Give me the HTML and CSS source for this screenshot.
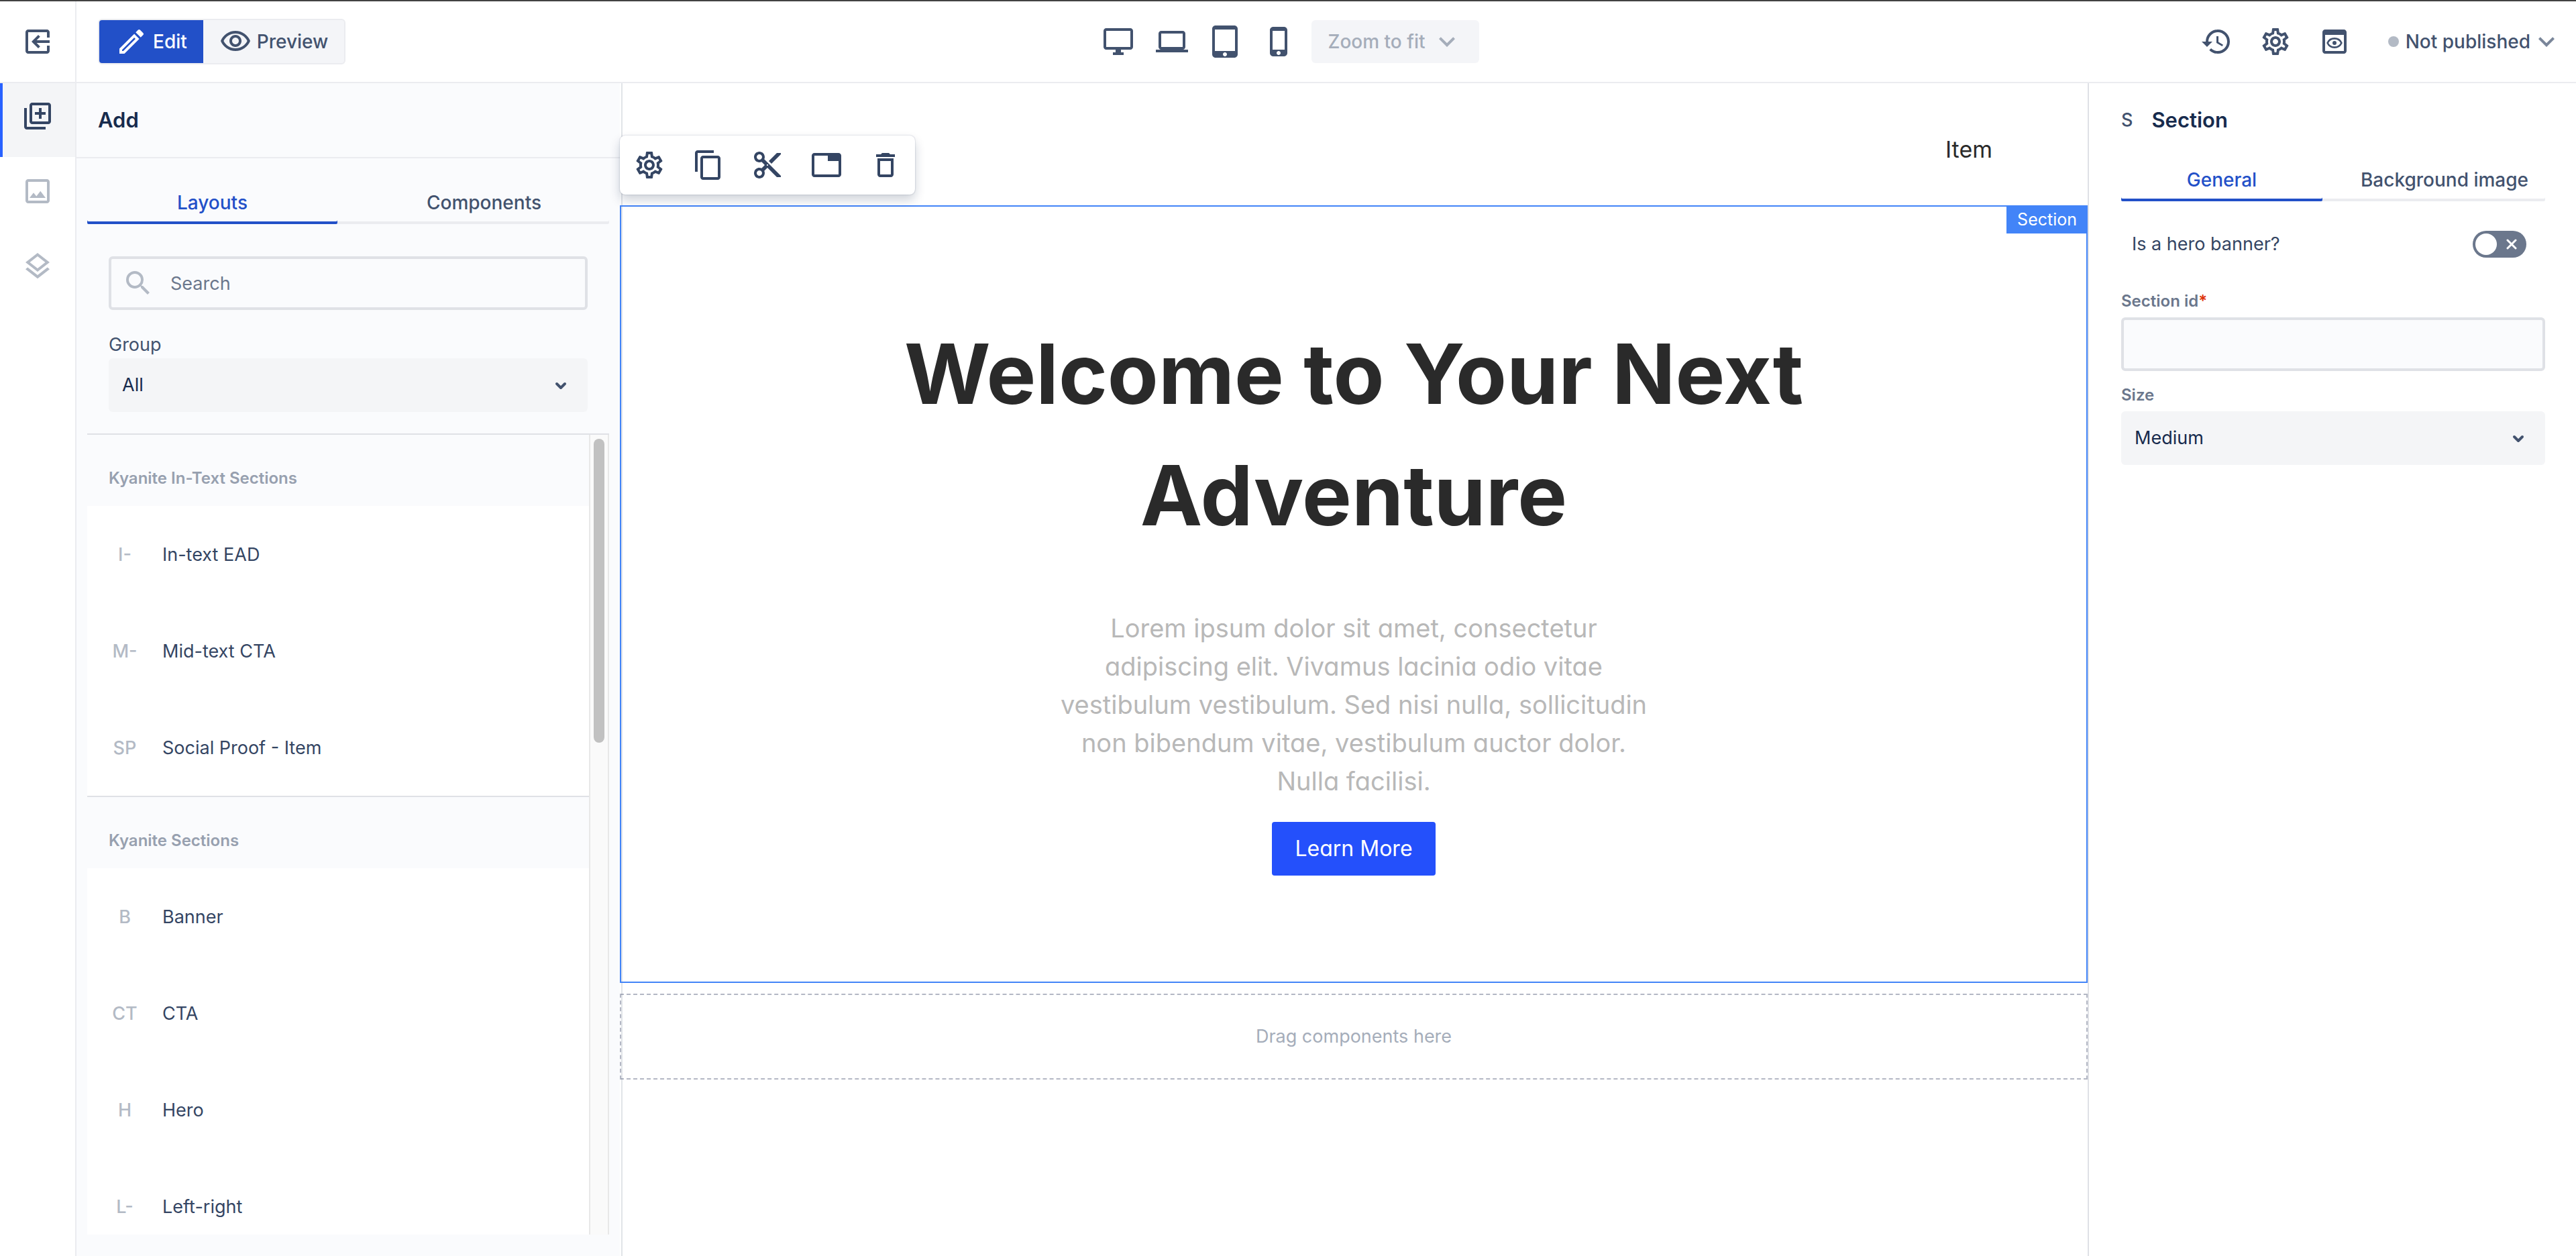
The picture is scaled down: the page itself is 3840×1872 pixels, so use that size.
FILE: index.html
```html
<!DOCTYPE html>
<html lang="en">
<head>
<meta charset="utf-8">
<meta name="viewport" content="width=device-width, initial-scale=1">
<title>Page editor</title>
<link rel="stylesheet" href="styles.css">
</head>
<body>
<svg class="sprite" aria-hidden="true">
  <symbol id="i-gear" viewBox="0 0 24 24"><path d="M19.43 12.98c.04-.32.07-.64.07-.98 0-.34-.03-.66-.07-.98l2.11-1.65c.19-.15.24-.42.12-.64l-2-3.46c-.09-.16-.26-.25-.44-.25-.06 0-.12.01-.17.03l-2.49 1c-.52-.4-1.08-.73-1.69-.98l-.38-2.65C14.46 2.18 14.25 2 14 2h-4c-.25 0-.46.18-.49.42l-.38 2.65c-.61.25-1.17.59-1.69.98l-2.49-1c-.06-.02-.12-.03-.18-.03-.17 0-.34.09-.43.25l-2 3.46c-.13.22-.07.49.12.64l2.11 1.65c-.04.32-.07.65-.07.98 0 .33.03.66.07.98l-2.11 1.65c-.19.15-.24.42-.12.64l2 3.46c.09.16.26.25.44.25.06 0 .12-.01.17-.03l2.49-1c.52.4 1.08.73 1.69.98l.38 2.65c.03.24.24.42.49.42h4c.25 0 .46-.18.49-.42l.38-2.65c.61-.25 1.17-.59 1.69-.98l2.49 1c.06.02.12.03.18.03.17 0 .34-.09.43-.25l2-3.46c.12-.22.07-.49-.12-.64l-2.11-1.65zm-1.98-1.71c.04.31.05.52.05.73 0 .21-.02.43-.05.73l-.14 1.13.89.7 1.08.84-.7 1.21-1.27-.51-1.04-.42-.9.68c-.43.32-.84.56-1.25.73l-1.06.43-.16 1.13-.2 1.35h-1.4l-.19-1.35-.16-1.13-1.06-.43c-.43-.18-.83-.41-1.23-.71l-.91-.7-1.06.43-1.27.51-.7-1.21 1.08-.84.89-.7-.14-1.13c-.03-.31-.05-.54-.05-.74s.02-.43.05-.73l.14-1.13-.89-.7-1.08-.84.7-1.21 1.27.51 1.04.42.9-.68c.43-.32.84-.56 1.25-.73l1.06-.43.16-1.13.2-1.35h1.39l.19 1.35.16 1.13 1.06.43c.43.18.83.41 1.23.71l.91.7 1.06-.43 1.27-.51.7 1.21-1.07.85-.89.7.14 1.13zM12 8c-2.21 0-4 1.79-4 4s1.79 4 4 4 4-1.79 4-4-1.79-4-4-4zm0 6c-1.1 0-2-.9-2-2s.9-2 2-2 2 .9 2 2-.9 2-2 2z"/></symbol>
  <symbol id="i-chevron" viewBox="0 0 24 24"><path d="M16.59 8.59 12 13.17 7.41 8.59 6 10l6 6 6-6z"/></symbol>
  <symbol id="i-caret" viewBox="0 0 24 24"><path d="M9 11l3 3 3-3" fill="none" stroke="currentColor" stroke-width="2" stroke-linecap="round" stroke-linejoin="round"/></symbol>
</svg>

<header class="topbar">
  <div class="topbar-start">
    <button class="exit" aria-label="Exit"><svg class="icon" viewBox="0 0 24 24"><path d="M13.91 15.59 12.5 17l-5-5 5-5 1.41 1.41L11.33 11H21v2h-9.67l2.58 2.59zM5 3h14c1.1 0 2 .9 2 2v4h-2V5H5v14h14v-4h2v4c0 1.1-.9 2-2 2H5c-1.1 0-2-.9-2-2V5c0-1.1.9-2 2-2z"/></svg></button>
    <div class="mode">
      <button class="mode-btn mode-btn-on"><svg class="icon" viewBox="0 0 24 24"><path d="M14.06 9.02l.92.92L5.92 19H5v-.92l9.06-9.06M17.66 3c-.25 0-.51.1-.7.29l-1.83 1.83 3.75 3.75 1.83-1.83c.39-.39.39-1.02 0-1.41l-2.34-2.34c-.2-.2-.45-.29-.71-.29zm-3.6 3.19L3 17.25V21h3.75L17.81 9.94l-3.75-3.75z"/></svg>Edit</button>
      <button class="mode-btn"><svg class="icon" viewBox="0 0 24 24"><path d="M12 6c3.79 0 7.17 2.13 8.82 5.5C19.17 14.87 15.79 17 12 17s-7.17-2.13-8.82-5.5C4.83 8.13 8.21 6 12 6m0-2C7 4 2.73 7.11 1 11.5 2.73 15.89 7 19 12 19s9.27-3.11 11-7.5C21.27 7.11 17 4 12 4zm0 5c1.38 0 2.5 1.12 2.5 2.5S13.38 14 12 14s-2.5-1.12-2.5-2.5S10.62 9 12 9m0-2c-2.48 0-4.5 2.02-4.5 4.5S9.52 16 12 16s4.5-2.02 4.5-4.5S14.48 7 12 7z"/></svg>Preview</button>
    </div>
  </div>
  <div class="devices">
    <button class="icon-btn" aria-label="Desktop"><svg class="icon" viewBox="0 0 24 24"><path d="M21 2H3c-1.1 0-2 .9-2 2v12c0 1.1.9 2 2 2h7v2H8v2h8v-2h-2v-2h7c1.1 0 2-.9 2-2V4c0-1.1-.9-2-2-2zm0 14H3V4h18v12z"/></svg></button>
    <button class="icon-btn" aria-label="Laptop"><svg class="icon" viewBox="0 0 24 24"><path d="M20 18c1.1 0 1.99-.9 1.99-2L22 6c0-1.1-.9-2-2-2H4c-1.1 0-2 .9-2 2v10c0 1.1.9 2 2 2H0v2h24v-2h-4zM4 6h16v10H4V6z"/></svg></button>
    <button class="icon-btn" aria-label="Tablet"><svg class="icon" viewBox="0 0 24 24"><path d="M18.5 0h-14C3.12 0 2 1.12 2 2.5v19C2 22.88 3.12 24 4.5 24h14c1.38 0 2.5-1.12 2.5-2.5v-19C21 1.12 19.88 0 18.5 0zm-7 23c-.83 0-1.5-.67-1.5-1.5s.67-1.5 1.5-1.5 1.5.67 1.5 1.5-.67 1.5-1.5 1.5zm7.500-4H4V3h15v16z"/></svg></button>
    <button class="icon-btn" aria-label="Phone"><svg class="icon" viewBox="0 0 24 24"><path d="M15.500 1h-8C6.120 1 5 2.120 5 3.500v17C5 21.880 6.120 23 7.500 23h8c1.380 0 2.500-1.120 2.500-2.500v-17C18 2.120 16.880 1 15.500 1zm-4 21c-.83 0-1.500-.67-1.500-1.500s.67-1.500 1.500-1.500 1.500.67 1.500 1.500-.67 1.500-1.500 1.500zm4.500-4H7V4h9v14z"/></svg></button>
    <button class="zoom" disabled>Zoom to fit<svg class="icon"><use href="#i-chevron"/></svg></button>
  </div>
  <div class="topbar-end">
    <button class="icon-btn" aria-label="History"><svg class="icon" viewBox="0 0 24 24"><path d="M13 3a9 9 0 0 0-9 9H1l3.890 3.890.07.14L9 12H6c0-3.870 3.130-7 7-7s7 3.130 7 7-3.130 7-7 7c-1.930 0-3.680-.79-4.940-2.060l-1.420 1.420A8.950 8.950 0 0 0 13 21a9 9 0 0 0 0-18zm-1 5v5l4.280 2.540.72-1.210-3.500-2.080V8H12z"/></svg></button>
    <button class="icon-btn" aria-label="Settings"><svg class="icon"><use href="#i-gear"/></svg></button>
    <button class="icon-btn" aria-label="Page preview"><svg class="icon" viewBox="0 0 24 24"><path fill-rule="evenodd" d="M19 3H5c-1.110 0-2 .9-2 2v14c0 1.100.89 2 2 2h14c1.100 0 2-.9 2-2V5c0-1.100-.89-2-2-2zm0 16H5V7h14v12z"/><path d="M6.800 13C7.700 11 9.700 9.700 12 9.700s4.300 1.300 5.200 3.300c-.9 2-2.900 3.300-5.200 3.300S7.700 15 6.800 13z" fill="none" stroke="currentColor" stroke-width="1.300"/><circle cx="12" cy="13" r="1.500"/></svg></button>
    <button class="status"><span class="status-dot"></span>Not published<svg class="icon"><use href="#i-chevron"/></svg></button>
  </div>
</header>

<div class="workspace">
  <nav class="rail" aria-label="Editor panels">
    <button class="rail-btn rail-btn-on" aria-label="Add"><svg class="icon" viewBox="0 0 24 24"><path d="M4 6H2v14c0 1.100.9 2 2 2h14v-2H4V6zm16-4H8c-1.100 0-2 .9-2 2v12c0 1.100.9 2 2 2h12c1.100 0 2-.9 2-2V4c0-1.100-.9-2-2-2zm0 14H8V4h12v12zm-7-2h2v-3h3V9h-3V6h-2v3h-3v2h3z"/></svg></button>
    <button class="rail-btn" aria-label="Images"><svg class="icon" viewBox="0 0 24 24"><path d="M19 5v14H5V5h14m0-2H5c-1.100 0-2 .9-2 2v14c0 1.100.9 2 2 2h14c1.100 0 2-.9 2-2V5c0-1.100-.9-2-2-2zm-4.860 8.860l-3 3.870L9 13.140 6 17h12l-3.860-5.140z"/></svg></button>
    <button class="rail-btn" aria-label="Layers"><svg class="icon" viewBox="0 0 24 24"><path d="M11.990 18.540l-7.370-5.730L3 14.070l9 7 9-7-1.630-1.270-7.380 5.740zM12 16l7.360-5.730L21 9l-9-7-9 7 1.630 1.270L12 16zm0-11.470L17.740 9 12 13.470 6.260 9 12 4.530z"/></svg></button>
  </nav>

  <aside class="library">
    <h2 class="panel-title library-title">Add</h2>
    <div class="library-body">
      <div class="tabs" role="tablist">
        <button class="tab tab-on" role="tab" aria-selected="true">Layouts</button>
        <button class="tab" role="tab" aria-selected="false">Components</button>
      </div>
      <div class="filters">
        <div class="search">
          <svg class="icon" viewBox="0 0 24 24"><path d="M15.500 14h-.79l-.28-.27A6.471 6.471 0 0 0 16 9.500 6.500 6.500 0 1 0 9.500 16c1.610 0 3.090-.59 4.230-1.570l.27.28v.79l5 4.990L20.490 19l-4.990-5zm-6 0C7.010 14 5 11.990 5 9.500S7.010 5 9.500 5 14 7.010 14 9.500 11.990 14 9.500 14z"/></svg>
          <input class="search-input" type="search" placeholder="Search" aria-label="Search">
        </div>
        <label class="group-label" for="group">Group</label>
        <div class="picker">
          <select id="group" class="select"><option>All</option></select>
          <svg class="icon picker-caret"><use href="#i-caret"/></svg>
        </div>
      </div>
      <div class="results">
        <div class="results-list">
          <section class="kit">
            <h3 class="kit-title">Kyanite In-Text Sections</h3>
            <ul class="kit-items">
              <li class="kit-item"><span class="kit-mark">I-</span>In-text EAD</li>
              <li class="kit-item"><span class="kit-mark">M-</span>Mid-text CTA</li>
              <li class="kit-item"><span class="kit-mark">SP</span>Social Proof - Item</li>
            </ul>
          </section>
          <section class="kit">
            <h3 class="kit-title">Kyanite Sections</h3>
            <ul class="kit-items">
              <li class="kit-item"><span class="kit-mark">B</span>Banner</li>
              <li class="kit-item"><span class="kit-mark">CT</span>CTA</li>
              <li class="kit-item"><span class="kit-mark">H</span>Hero</li>
              <li class="kit-item"><span class="kit-mark">L-</span>Left-right</li>
            </ul>
          </section>
        </div>
        <div class="scrollbar" aria-hidden="true"><div class="scrollbar-thumb"></div></div>
      </div>
    </div>
  </aside>

  <main class="canvas">
    <div class="site-nav"><a class="site-link" href="#">Item</a></div>
    <section class="block">
      <div class="block-tools">
        <button class="icon-btn" aria-label="Settings"><svg class="icon"><use href="#i-gear"/></svg></button>
        <button class="icon-btn" aria-label="Copy"><svg class="icon" viewBox="0 0 24 24"><path d="M16 1H4c-1.100 0-2 .9-2 2v14h2V3h12V1zm3 4H8c-1.100 0-2 .9-2 2v14c0 1.100.9 2 2 2h11c1.100 0 2-.9 2-2V7c0-1.100-.9-2-2-2zm0 16H8V7h11v14z"/></svg></button>
        <button class="icon-btn" aria-label="Cut"><svg class="icon" viewBox="0 0 24 24"><path d="M9.640 7.640c.23-.5.36-1.050.36-1.640 0-2.210-1.790-4-4-4S2 3.790 2 6s1.790 4 4 4c.59 0 1.140-.13 1.640-.36L10 12l-2.360 2.360C7.140 14.130 6.590 14 6 14c-2.210 0-4 1.790-4 4s1.790 4 4 4 4-1.790 4-4c0-.59-.13-1.140-.36-1.640L12 14l7 7h3v-1L9.640 7.640zM6 8c-1.100 0-2-.89-2-2s.9-2 2-2 2 .89 2 2-.9 2-2 2zm0 12c-1.100 0-2-.89-2-2s.9-2 2-2 2 .89 2 2-.9 2-2 2zm6-7.500c-.28 0-.5-.22-.5-.5s.22-.5.5-.5.5.22.5.5-.22.5-.5.5zM19 3l-6 6 2 2 7-7V3z"/></svg></button>
        <button class="icon-btn" aria-label="Placeholder"><svg class="icon" viewBox="0 0 24 24"><path d="M21 3H3c-1.100 0-2 .9-2 2v14c0 1.100.9 2 2 2h18c1.100 0 2-.9 2-2V5c0-1.100-.9-2-2-2zm0 16H3V5h10v4h8v10z"/></svg></button>
        <button class="icon-btn" aria-label="Delete"><svg class="icon" viewBox="0 0 24 24"><path d="M6 19c0 1.100.9 2 2 2h8c1.100 0 2-.9 2-2V7H6v12zM8 9h8v10H8V9zm7.500-5l-1-1h-5l-1 1H5v2h14V4z"/></svg></button>
      </div>
      <span class="block-tag">Section</span>
      <h1 class="hero-title">Welcome to Your Next<br>Adventure</h1>
      <p class="hero-text">Lorem ipsum dolor sit amet, consectetur<br>adipiscing elit. Vivamus lacinia odio vitae<br>vestibulum vestibulum. Sed nisi nulla, sollicitudin<br>non bibendum vitae, vestibulum auctor dolor.<br>Nulla facilisi.</p>
      <a class="hero-cta" href="#">Learn More</a>
    </section>
    <div class="dropzone">Drag components here</div>
  </main>

  <aside class="inspector">
    <h2 class="panel-title inspector-title"><span class="inspector-mark">S</span>Section</h2>
    <div class="tabs" role="tablist">
      <button class="tab tab-on" role="tab" aria-selected="true">General</button>
      <button class="tab" role="tab" aria-selected="false">Background image</button>
    </div>
    <div class="toggle-row">
      <label for="hero">Is a hero banner?</label>
      <span class="toggle"><input id="hero" class="toggle-input" type="checkbox" role="switch"><svg class="toggle-x" viewBox="0 0 16 16"><path d="M2 2l12 12M14 2 2 14" fill="none" stroke="currentColor" stroke-width="3" stroke-linecap="round"/></svg></span>
    </div>
    <div class="field">
      <label class="field-label" for="section-id">Section id<span class="required">*</span></label>
      <input id="section-id" class="text-input" type="text">
    </div>
    <div class="field">
      <label class="field-label" for="size">Size</label>
      <div class="picker">
        <select id="size" class="select"><option>Medium</option></select>
        <svg class="icon picker-caret"><use href="#i-caret"/></svg>
      </div>
    </div>
  </aside>
</div>
</body>
</html>
```
FILE: styles.css
```css
* { box-sizing: border-box; }

body {
  margin: 0;
  height: 100vh;
  display: flex;
  flex-direction: column;
  border-top: 2px solid #424242;
  background: #fff;
  color: #42526e;
  font: 400 27px/40px Inter, "Liberation Sans", sans-serif;
}

button, input, select { font: inherit; color: inherit; }
button { margin: 0; padding: 0; border: 0; background: none; cursor: pointer; }
h1, h2, h3, p, ul { margin: 0; padding: 0; font: inherit; }
ul { list-style: none; }
a { text-decoration: none; }

.sprite { display: none; }
.icon { display: block; flex: none; width: 48px; height: 48px; fill: currentColor; }
.icon-btn { display: grid; place-items: center; flex: none; width: 64px; height: 64px; }

/* Top bar */
.topbar {
  flex: none;
  display: grid;
  grid-template-columns: 1fr auto 1fr;
  align-items: center;
  height: 122px;
  border-bottom: 2px solid #ebecf0;
  font-size: 28px;
  font-weight: 500;
}
.topbar-start { display: flex; align-items: center; align-self: stretch; gap: 32px; }
.exit { display: grid; place-items: center; align-self: stretch; width: 114px; border-right: 2px solid #ebecf0; }
.mode { display: flex; border: 2px solid #ebecf0; border-radius: 6px; background: #f4f5f8; }
.mode-btn { display: flex; align-items: center; gap: 8px; height: 64px; padding: 0 24px; }
.mode-btn-on { border-radius: 4px 0 0 4px; background: #2250c8; color: #fff; }
.devices { display: flex; gap: 16px; }
.zoom {
  display: flex;
  align-items: center;
  gap: 8px;
  height: 64px;
  padding: 0 24px;
  border-radius: 6px;
  background: #f4f5f8;
  color: #a5adba;
}
.topbar-end { display: flex; justify-content: flex-end; align-items: center; gap: 24px; padding-right: 20px; }
.status { display: flex; align-items: center; margin-left: 24px; }
.status-dot { width: 16px; height: 16px; margin-right: 10px; border-radius: 50%; background: #b3bac5; }
.status .icon { color: #7a869a; }

/* Columns */
.workspace {
  flex: 1;
  min-height: 0;
  display: grid;
  grid-template-columns: 114px 810px minmax(0, 1fr) 728px;
}

.rail { display: flex; flex-direction: column; gap: 2px; border-right: 2px solid #ebecf0; }
.rail-btn { display: flex; justify-content: center; padding: 25px 0 37px; color: #b3bac5; }
.rail-btn-on { background: #f4f5f7; box-shadow: inset 4px 0 #2962ff; color: #344563; }

.panel-title { color: #172b4d; font-size: 31px; font-weight: 600; }

/* Tabs */
.tabs { display: grid; grid-template-columns: 1fr 1fr; column-gap: 32px; box-shadow: inset 0 -4px #ebecf0; border-radius: 2px; }
.tab { height: 64px; border-radius: 2px; font-size: 28px; font-weight: 500; }
.tab-on { box-shadow: inset 0 -4px #2250c8; color: #2250c8; }

/* Form parts */
.picker { position: relative; }
.select {
  appearance: none;
  display: block;
  width: 100%;
  height: 80px;
  padding: 0 20px;
  border: 0;
  border-radius: 6px;
  background: #f4f5f7;
  color: #172b4d;
}
.picker-caret { position: absolute; top: 16px; right: 16px; color: #42526e; pointer-events: none; }
.text-input, .search {
  height: 80px;
  border: 4px solid #dfe1e6;
  border-radius: 6px;
  background: #fafbfd;
}

/* Library panel */
.library { display: flex; flex-direction: column; min-height: 0; background: #fafbfd; }
.library-title { flex: none; padding: 35px 32px; border-bottom: 2px solid #ebecf0; }
.library-body { flex: 1; min-height: 0; display: flex; flex-direction: column; padding: 34px 16px 32px; }
.filters { padding: 48px 32px 32px; }
.search { display: flex; align-items: center; gap: 24px; padding-left: 16px; }
.search .icon { color: #b3bac5; }
.search-input { appearance: none; flex: 1; min-width: 0; padding: 2px 0 0; border: 0; outline: 0; background: none; }
.search-input::placeholder { color: #6b778c; opacity: 1; }
.group-label { display: block; margin-top: 32px; }

.results { flex: 1; min-height: 0; display: flex; border-top: 2px solid #dfe1e6; }
.results-list { flex: 1; overflow: hidden; background: #fff; }
.kit-title {
  height: 106px;
  padding: 45px 32px 21px;
  background: #fafbfd;
  color: #97a0af;
  font-size: 24px;
  font-weight: 600;
}
.kit + .kit { border-top: 2px solid #dfe1e6; }
.kit-item { display: flex; align-items: center; gap: 32px; height: 144px; padding: 2px 32px 0; color: #344563; }
.kit-mark { width: 48px; color: #b3bac5; font-weight: 500; text-align: center; }
.scrollbar { flex: none; width: 30px; padding: 6px 5px; border: solid #e8e8e8; border-width: 0 2px; background: #fafafa; }
.scrollbar-thumb { width: 16px; height: 38.4%; margin: 0 auto; border-radius: 8px; background: #c1c1c1; }

/* Canvas */
.canvas { position: relative; display: flex; flex-direction: column; min-height: 0; }
.canvas::before {
  content: "";
  position: absolute;
  inset: 0 auto 0 2px;
  width: 2px;
  background: rgba(9, 30, 66, .12);
}
.site-nav { display: flex; justify-content: flex-end; padding: 79px 142px 63px; }
.site-link { color: #2a2a2a; font-size: 34px; }
.block {
  position: relative;
  display: flex;
  flex-direction: column;
  align-items: center;
  padding: 159px 32px 158px;
  border: 2px solid #4284f8;
  text-align: center;
}
.block-tools {
  position: absolute;
  bottom: calc(100% + 18px);
  left: -2px;
  display: flex;
  gap: 24px;
  padding: 12px;
  border-radius: 8px;
  background: #fff;
  box-shadow: 0 0 2px rgba(9, 30, 66, .3), 0 8px 16px rgba(9, 30, 66, .2);
  color: #344563;
}
.block-tag { position: absolute; top: -2px; right: -2px; padding: 1px 16px; background: #4284f8; color: #fff; font-size: 25px; }
.hero-title { color: #2a2a2a; font-size: 124px; line-height: 181px; font-weight: 700; }
.hero-text { margin-top: 79px; color: #b8b8b8; font-size: 38px; line-height: 57px; font-feature-settings: "cv11"; }
.hero-cta {
  margin-top: 32px;
  padding: 20px 34px;
  border-radius: 4px;
  background: #2450fb;
  color: #fff;
  font-size: 32px;
  font-feature-settings: "cv11";
}
.dropzone { display: grid; place-items: center; height: 128px; margin-top: 16px; border: 2px dashed #b3b7c4; color: #a5adba; }

/* Inspector */
.inspector { padding: 35px 46px 0 48px; border-left: 2px solid #dfe1e6; }
.inspector-title { display: flex; gap: 28px; margin-bottom: 37px; }
.inspector-mark { color: #42526e; font-size: 27px; font-weight: 500; }
.toggle-row { display: flex; justify-content: space-between; align-items: center; padding: 44px 28px 45px 16px; color: #344563; }
.toggle { position: relative; display: block; height: 40px; color: #fff; }
.toggle-input { appearance: none; display: block; width: 80px; height: 40px; margin: 0; padding: 4px; border-radius: 20px; background: #6b778c; }
.toggle-input::before { content: ""; display: block; width: 32px; height: 32px; border-radius: 50%; background: #fff; }
.toggle-x { position: absolute; top: 12px; right: 14px; width: 16px; height: 16px; pointer-events: none; }
.field { margin-bottom: 16px; }
.field-label { display: block; padding-bottom: 4px; color: #6b778c; font-size: 24px; font-weight: 600; }
.required { color: #de350b; }
.text-input { display: block; width: 100%; padding: 0 16px; }
```
